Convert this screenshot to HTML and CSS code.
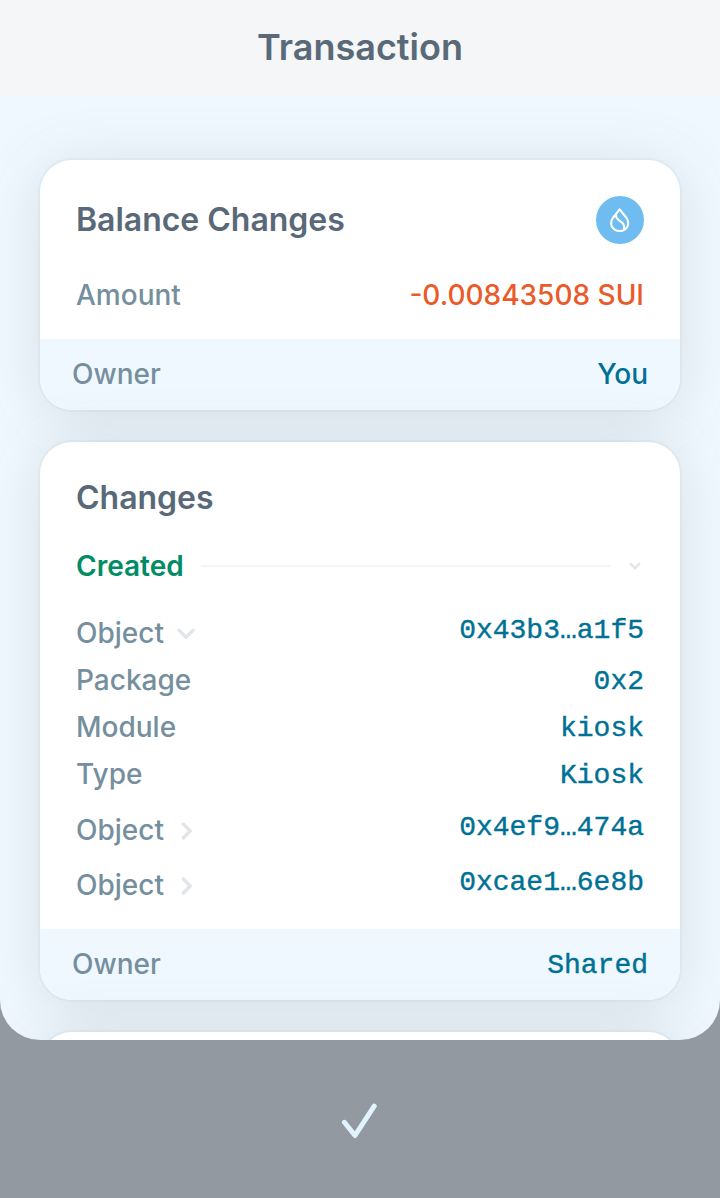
FILE: index.html
```html
<!DOCTYPE html>
<html lang="en">
<head>
<meta charset="utf-8">
<title>Transaction</title>
<link rel="stylesheet" href="styles.css">
</head>
<body>
<div class="screen">
  <main class="sheet">
    <header class="topbar"><h1 class="title">Transaction</h1></header>
    <div class="content">
      <section class="card">
        <div class="balance">
          <div class="row balance-head">
            <h2 class="heading">Balance Changes</h2>
            <span class="coin">
              <svg width="48" height="48" viewBox="0 0 48 48" fill="none" stroke="#fff" stroke-width="2.1" stroke-linejoin="round"><path d="M23.7 13.3L17.2 21.5C12.5 28.2 16.6 35 23.7 35C30.8 35 34.8 28.2 30.2 21.5Z"/><path d="M20 18.5C18.6 25.7 29.9 24.2 28 33.3"/></svg>
            </span>
          </div>
          <div class="row amount-row"><span class="label">Amount</span><span class="amount">-0.00843508 SUI</span></div>
        </div>
        <footer class="row owner"><span class="label">Owner</span><span class="you">You</span></footer>
      </section>

      <section class="card">
        <div class="changes">
          <h2 class="heading">Changes</h2>
          <div class="created">
            <span class="created-label">Created</span>
            <span class="rule"></span>
            <svg class="fold" width="12" height="8" viewBox="0 0 12 8"><path d="M1 1.2L6 6.2L11 1.2"/></svg>
          </div>
          <div class="row object first">
            <span class="label">Object<svg class="chevron" width="18" height="12" viewBox="0 0 18 12"><path d="M2 2.3L9 9.2L16 2.3"/></svg></span>
            <span class="mono">0x43b3…a1f5</span>
          </div>
          <div class="row detail"><span class="label">Package</span><span class="mono">0x2</span></div>
          <div class="row detail"><span class="label">Module</span><span class="mono">kiosk</span></div>
          <div class="row detail"><span class="label">Type</span><span class="mono">Kiosk</span></div>
          <div class="row object">
            <span class="label">Object<svg class="chevron side" width="12" height="18" viewBox="0 0 12 18"><path d="M2.3 2L9.2 9L2.3 16"/></svg></span>
            <span class="mono">0x4ef9…474a</span>
          </div>
          <div class="row object">
            <span class="label">Object<svg class="chevron side" width="12" height="18" viewBox="0 0 12 18"><path d="M2.3 2L9.2 9L2.3 16"/></svg></span>
            <span class="mono">0xcae1…6e8b</span>
          </div>
        </div>
        <footer class="row owner"><span class="label">Owner</span><span class="mono">Shared</span></footer>
      </section>

      <section class="card next"></section>
    </div>
  </main>
  <div class="dock">
    <svg width="40" height="40" viewBox="0 0 40 40" fill="none" stroke="#e1f3ff" stroke-width="5" stroke-linecap="round" stroke-linejoin="round"><path d="M4.4 23.3L15 36.5L34.2 7.2"/></svg>
  </div>
</div>
</body>
</html>
```
FILE: styles.css
```css
* { box-sizing: border-box; }
body { margin: 0; font-family: Inter, sans-serif; background: #9299a0; }
h1, h2 { margin: 0; font-weight: 600; color: #596977; }
.screen { width: 720px; height: 1198px; display: flex; flex-direction: column; background: #9299a0; overflow: hidden; }
.sheet { height: 1040px; overflow: hidden; border-radius: 0 0 40px 40px; background: #f0f8ff; }
.topbar { height: 96px; padding-bottom: 2px; display: flex; align-items: center; justify-content: center; background: #f4f6f8; }
.title { font-size: 36px; line-height: 44px; }
.content { padding: 64px 40px 0; display: flex; flex-direction: column; gap: 32px; height: 944px; overflow: hidden; }
.card { flex: none; border-radius: 32px; background: #fff; overflow: hidden; box-shadow: 0 0 0 2px rgba(160, 190, 195, 0.12), 0 6px 60px rgba(90, 98, 108, 0.17); }
.row { display: flex; justify-content: space-between; align-items: center; font-size: 28px; line-height: 36px; }
.heading { font-size: 32px; line-height: 40px; letter-spacing: -0.02px; }
.balance { height: 179px; padding: 36px 36px 0; }
.balance-head { height: 48px; }
.amount-row { margin-top: 33px; }
.coin { display: flex; width: 48px; height: 48px; border-radius: 50%; background: #6fbcf0; }
.label { color: #758f9e; font-weight: 500; }
.amount { color: #eb5a29; font-weight: 500; }
.owner { height: 71px; padding: 0 32px 2px; background: #f0f8ff; }
.you { color: #007195; font-weight: 500; }
.mono { font-family: "Liberation Mono", monospace; color: #007195; -webkit-text-stroke: 0.4px #007195; padding-top: 4px; }
.changes { height: 487px; padding: 36px 36px 0; }
.created { display: flex; align-items: center; height: 36px; margin-top: 30px; padding-right: 3px; font-size: 28px; }
.created-label { color: #008c65; font-weight: 600; }
.rule { flex: 1; height: 2px; margin: 0 18px 0 17px; background: #f3f4f5; }
.fold { fill: none; stroke: #e3e6e8; stroke-width: 2.4; }
.detail { height: 47px; }
.object { height: 55px; }
.object .mono { margin-top: -8px; }
.first { margin-top: 21px; height: 56px; margin-bottom: -5px; }
.detail + .object { margin-top: 5px; }
.label .chevron { margin-left: 13px; vertical-align: 3px; }
.label .side { margin-left: 17px; vertical-align: 0; }
.chevron { fill: none; stroke: #e3e6e9; stroke-width: 3.5; stroke-linecap: round; stroke-linejoin: round; }
.next { height: 200px; }
.dock { flex: 1; display: flex; align-items: center; justify-content: center; }
```
